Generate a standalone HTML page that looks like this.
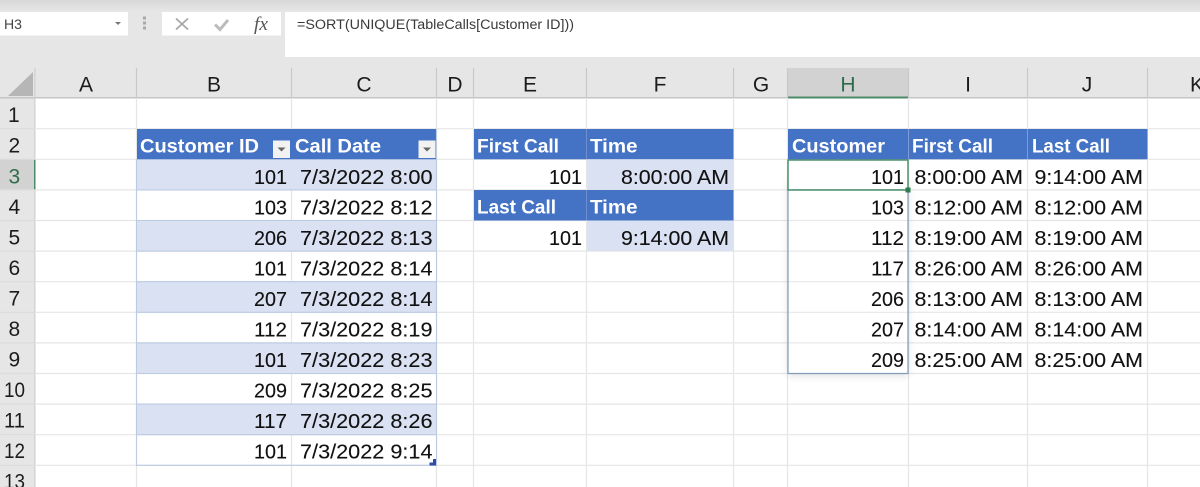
<!DOCTYPE html>
<html><head><meta charset="utf-8"><style>
html,body{margin:0;padding:0;background:#fff;width:1200px;height:487px;overflow:hidden}
svg{display:block;filter:blur(.35px)}
text{font-family:"Liberation Sans",sans-serif}
.c{font-size:20.500px;fill:#111;stroke:#111;stroke-width:.12px}
.h{font-size:19.500px;font-weight:bold;fill:#fff}
.l{font-size:21px;fill:#1c1c1c;text-anchor:middle}
.r{font-size:21px;fill:#1c1c1c}
</style></head><body>
<svg width="1200" height="487" viewBox="0 0 1200 487" xmlns="http://www.w3.org/2000/svg">
<defs>
<linearGradient id="top" x1="0" y1="0" x2="0" y2="1"><stop offset="0" stop-color="#d8d8d8"/><stop offset="1" stop-color="#e6e6e6"/></linearGradient>
<filter id="sh" x="-20%" y="-10%" width="140%" height="120%"><feGaussianBlur stdDeviation="4"/></filter>
</defs>
<rect width="1200" height="68" fill="#e6e6e6"/>
<rect width="1200" height="11" fill="url(#top)"/>
<rect x="0" y="12" width="128" height="23.500" fill="#fff"/>
<text x="4" y="29" font-size="13.500" fill="#444" textLength="18" lengthAdjust="spacingAndGlyphs">H3</text>
<path d="M115 22h6l-3 3z" fill="#777"/>
<g fill="#a8a8a8"><rect x="143" y="16.500" width="3" height="3"/><rect x="143" y="21.500" width="3" height="3"/><rect x="143" y="26.500" width="3" height="3"/></g>
<rect x="162" y="12" width="119" height="23.500" fill="#fff"/>
<path d="M176 18.500l12 11M188 18.500l-12 11" stroke="#a8a8a8" stroke-width="1.800" fill="none"/>
<path d="M215 24.500l5 5 8-9.500" stroke="#bcbcbc" stroke-width="3" fill="none"/>
<text x="254" y="30" font-size="19" font-style="italic" fill="#555" style="font-family:'Liberation Serif',serif" textLength="14" lengthAdjust="spacingAndGlyphs">fx</text>
<rect x="285" y="12" width="915" height="45" fill="#fff"/>
<text x="297" y="29" font-size="13.500" fill="#3a3a3a" textLength="277" lengthAdjust="spacingAndGlyphs">=SORT(UNIQUE(TableCalls[Customer ID]))</text>

<!-- headers -->
<rect x="0" y="68" width="1200" height="30" fill="#e6e6e6"/>
<rect x="0" y="68" width="35" height="419" fill="#e6e6e6"/>
<rect x="788" y="68" width="120" height="30" fill="#d2d2d2"/>
<rect x="0" y="159.500" width="35" height="30.500" fill="#d2d2d2"/>
<path d="M33 72v24H8z" fill="#b6b6b6"/>
<rect x="0" y="97" width="1200" height="1.500" fill="#c4c4c4"/>
<rect x="34.300" y="68" width="1.200" height="419" fill="#cfcfcf"/>
<rect x="788" y="96.500" width="120" height="2" fill="#4c8a68"/>
<rect x="34" y="159.500" width="1.500" height="30.500" fill="#4c8a68"/>
<g stroke="#c8c8c8" stroke-width="1.200">
<path d="M136.500 68v30M291.500 68v30M436.500 68v30M473.500 68v30M586.500 68v30M733.500 68v30M787.500 68v30M908.500 68v30M1027.500 68v30M1147.500 68v30"/>
</g>
<g stroke="#dcdcdc" stroke-width="1.200">
<path d="M0 128.700h35M0 159.300h35M0 189.900h35M0 220.500h35M0 251.100h35M0 281.700h35M0 312.300h35M0 342.900h35M0 373.500h35M0 404.100h35M0 434.700h35M0 465.300h35"/>
</g>
<!-- grid -->
<g stroke="#e6e6e6" stroke-width="1.200">
<path d="M35 128.700H1200M35 159.300H1200M35 189.900H1200M35 220.500H1200M35 251.100H1200M35 281.700H1200M35 312.300H1200M35 342.900H1200M35 373.500H1200M35 404.100H1200M35 434.700H1200M35 465.300H1200"/>
<path d="M136.500 98V487M291.500 98V487M436.500 98V487M473.500 98V487M586.500 98V487M733.500 98V487M787.500 98V487M908.500 98V487M1027.500 98V487M1147.500 98V487"/>
</g>

<!-- table B:C -->
<g fill="#d9e1f2">
<rect x="137" y="159.300" width="299" height="30.600"/>
<rect x="137" y="220.500" width="299" height="30.600"/>
<rect x="137" y="281.700" width="299" height="30.600"/>
<rect x="137" y="342.900" width="299" height="30.600"/>
<rect x="137" y="404.100" width="299" height="30.600"/>
</g>
<rect x="137" y="129" width="299" height="30.300" fill="#4472c4"/>
<g stroke="#bccae2" stroke-width="1.100" fill="none">
<path d="M137 189.900H436M137 220.500H436M137 251.100H436M137 281.700H436M137 312.300H436M137 342.900H436M137 373.500H436M137 404.100H436M137 434.700H436M137 465.300H436"/>
<path d="M136.500 159V466M436.500 129V466"/>
</g>
<rect x="273" y="140.500" width="17" height="17.500" fill="#f2f2f2"/>
<path d="M277.500 147.500h8l-4 4z" fill="#666"/>
<rect x="418.500" y="140.500" width="17" height="17.500" fill="#f2f2f2"/>
<path d="M423 147.500h8l-4 4z" fill="#666"/>
<path d="M436 459v6.500h-6.500v-3h3.500v-3.500z" fill="#2f4da8"/>

<!-- E:F tables -->
<rect x="474" y="129" width="259.500" height="30.300" fill="#4472c4"/>
<rect x="474" y="190" width="259.500" height="30.500" fill="#4472c4"/>
<rect x="587" y="159.300" width="146.500" height="30.600" fill="#d9e1f2"/>
<rect x="587" y="220.500" width="146.500" height="30.600" fill="#d9e1f2"/>
<path d="M586.500 129v30M586.500 190v30.500" stroke="#6f90d0" stroke-width="1"/>

<!-- H:J table -->
<rect x="788" y="129" width="359.500" height="30.300" fill="#4472c4"/>
<path d="M908.500 129v30M1027.500 129v30" stroke="#7f9cd6" stroke-width="1"/>
<rect x="788" y="180" width="120" height="196" fill="#000" opacity=".12" filter="url(#sh)"/>
<rect x="788" y="160" width="120" height="213.500" fill="#fff"/>
<g stroke="#e8e8e8" stroke-width="1.200"><path d="M788 220.500h120M788 251.100h120M788 281.700h120M788 312.300h120M788 342.900h120"/></g>
<rect x="788" y="189.900" width="120" height="183.600" fill="none" stroke="#7f9cbb" stroke-width="1.200"/>
<rect x="788" y="160" width="120" height="30" fill="none" stroke="#3f8a62" stroke-width="1.400"/>
<rect x="905.500" y="187.500" width="5" height="5" fill="#2f7d52"/>

<!-- column letters -->
<text class="l" x="86" y="91.500">A</text>
<text class="l" x="214" y="91.500">B</text>
<text class="l" x="364" y="91.500">C</text>
<text class="l" x="455" y="91.500">D</text>
<text class="l" x="530" y="91.500">E</text>
<text class="l" x="660" y="91.500">F</text>
<text class="l" x="761" y="91.500">G</text>
<text class="l" x="848" y="91.500" style="fill:#2f6b4c">H</text>
<text class="l" x="968" y="91.500">I</text>
<text class="l" x="1087" y="91.500">J</text>
<text class="l" x="1197" y="91.500">K</text>

<!-- row numbers -->
<text class="r" x="8" y="122">1</text>
<text class="r" x="8.500" y="152.500">2</text>
<text class="r" x="8.500" y="183.500" style="fill:#2f6b4c">3</text>
<text class="r" x="8.500" y="214">4</text>
<text class="r" x="8.500" y="244.500">5</text>
<text class="r" x="8.500" y="275">6</text>
<text class="r" x="8.500" y="305.500">7</text>
<text class="r" x="8.500" y="336">8</text>
<text class="r" x="8.500" y="366.500">9</text>
<text class="r" x="4" y="397" textLength="21" lengthAdjust="spacingAndGlyphs">10</text>
<text class="r" x="4" y="427.500" textLength="21" lengthAdjust="spacingAndGlyphs">11</text>
<text class="r" x="4" y="458" textLength="21" lengthAdjust="spacingAndGlyphs">12</text>
<text class="r" x="4" y="488.500" textLength="21" lengthAdjust="spacingAndGlyphs">13</text>

<!-- B:C header -->
<text class="h" x="140" y="152.300" textLength="119" lengthAdjust="spacingAndGlyphs">Customer ID</text>
<text class="h" x="295" y="152.300" textLength="86" lengthAdjust="spacingAndGlyphs">Call Date</text>

<!-- B:C data -->
<text class="c" x="254" y="183.800" textLength="33" lengthAdjust="spacingAndGlyphs">101</text>
<text class="c" x="300" y="183.800" textLength="132.500" lengthAdjust="spacingAndGlyphs">7/3/2022 8:00</text>
<text class="c" x="254" y="214.300" textLength="33" lengthAdjust="spacingAndGlyphs">103</text>
<text class="c" x="300" y="214.300" textLength="132.500" lengthAdjust="spacingAndGlyphs">7/3/2022 8:12</text>
<text class="c" x="254" y="244.800" textLength="33" lengthAdjust="spacingAndGlyphs">206</text>
<text class="c" x="300" y="244.800" textLength="132.500" lengthAdjust="spacingAndGlyphs">7/3/2022 8:13</text>
<text class="c" x="254" y="275.300" textLength="33" lengthAdjust="spacingAndGlyphs">101</text>
<text class="c" x="300" y="275.300" textLength="132.500" lengthAdjust="spacingAndGlyphs">7/3/2022 8:14</text>
<text class="c" x="254" y="305.800" textLength="33" lengthAdjust="spacingAndGlyphs">207</text>
<text class="c" x="300" y="305.800" textLength="132.500" lengthAdjust="spacingAndGlyphs">7/3/2022 8:14</text>
<text class="c" x="254" y="336.300" textLength="33" lengthAdjust="spacingAndGlyphs">112</text>
<text class="c" x="300" y="336.300" textLength="132.500" lengthAdjust="spacingAndGlyphs">7/3/2022 8:19</text>
<text class="c" x="254" y="366.800" textLength="33" lengthAdjust="spacingAndGlyphs">101</text>
<text class="c" x="300" y="366.800" textLength="132.500" lengthAdjust="spacingAndGlyphs">7/3/2022 8:23</text>
<text class="c" x="254" y="397.300" textLength="33" lengthAdjust="spacingAndGlyphs">209</text>
<text class="c" x="300" y="397.300" textLength="132.500" lengthAdjust="spacingAndGlyphs">7/3/2022 8:25</text>
<text class="c" x="254" y="427.800" textLength="33" lengthAdjust="spacingAndGlyphs">117</text>
<text class="c" x="300" y="427.800" textLength="132.500" lengthAdjust="spacingAndGlyphs">7/3/2022 8:26</text>
<text class="c" x="254" y="458.300" textLength="33" lengthAdjust="spacingAndGlyphs">101</text>
<text class="c" x="300" y="458.300" textLength="132.500" lengthAdjust="spacingAndGlyphs">7/3/2022 9:14</text>

<!-- E:F -->
<text class="h" x="477" y="152.300" textLength="82" lengthAdjust="spacingAndGlyphs">First Call</text>
<text class="h" x="590" y="152.300" textLength="47.500" lengthAdjust="spacingAndGlyphs">Time</text>
<text class="c" x="549" y="183.800" textLength="33" lengthAdjust="spacingAndGlyphs">101</text>
<text class="c" x="621" y="183.800" textLength="108" lengthAdjust="spacingAndGlyphs">8:00:00 AM</text>
<text class="h" x="477" y="213.300" textLength="79" lengthAdjust="spacingAndGlyphs">Last Call</text>
<text class="h" x="590" y="213.300" textLength="47.500" lengthAdjust="spacingAndGlyphs">Time</text>
<text class="c" x="549" y="244.800" textLength="33" lengthAdjust="spacingAndGlyphs">101</text>
<text class="c" x="621" y="244.800" textLength="108" lengthAdjust="spacingAndGlyphs">9:14:00 AM</text>

<!-- H:J -->
<text class="h" x="792" y="152.300" textLength="93" lengthAdjust="spacingAndGlyphs">Customer</text>
<text class="h" x="912" y="152.300" textLength="81" lengthAdjust="spacingAndGlyphs">First Call</text>
<text class="h" x="1032" y="152.300" textLength="78" lengthAdjust="spacingAndGlyphs">Last Call</text>

<text class="c" x="871" y="183.800" textLength="33" lengthAdjust="spacingAndGlyphs">101</text>
<text class="c" x="914.500" y="183.800" textLength="108.500" lengthAdjust="spacingAndGlyphs">8:00:00 AM</text>
<text class="c" x="1034.500" y="183.800" textLength="108.500" lengthAdjust="spacingAndGlyphs">9:14:00 AM</text>
<text class="c" x="871" y="214.300" textLength="33" lengthAdjust="spacingAndGlyphs">103</text>
<text class="c" x="914.500" y="214.300" textLength="108.500" lengthAdjust="spacingAndGlyphs">8:12:00 AM</text>
<text class="c" x="1034.500" y="214.300" textLength="108.500" lengthAdjust="spacingAndGlyphs">8:12:00 AM</text>
<text class="c" x="871" y="244.800" textLength="33" lengthAdjust="spacingAndGlyphs">112</text>
<text class="c" x="914.500" y="244.800" textLength="108.500" lengthAdjust="spacingAndGlyphs">8:19:00 AM</text>
<text class="c" x="1034.500" y="244.800" textLength="108.500" lengthAdjust="spacingAndGlyphs">8:19:00 AM</text>
<text class="c" x="871" y="275.300" textLength="33" lengthAdjust="spacingAndGlyphs">117</text>
<text class="c" x="914.500" y="275.300" textLength="108.500" lengthAdjust="spacingAndGlyphs">8:26:00 AM</text>
<text class="c" x="1034.500" y="275.300" textLength="108.500" lengthAdjust="spacingAndGlyphs">8:26:00 AM</text>
<text class="c" x="871" y="305.800" textLength="33" lengthAdjust="spacingAndGlyphs">206</text>
<text class="c" x="914.500" y="305.800" textLength="108.500" lengthAdjust="spacingAndGlyphs">8:13:00 AM</text>
<text class="c" x="1034.500" y="305.800" textLength="108.500" lengthAdjust="spacingAndGlyphs">8:13:00 AM</text>
<text class="c" x="871" y="336.300" textLength="33" lengthAdjust="spacingAndGlyphs">207</text>
<text class="c" x="914.500" y="336.300" textLength="108.500" lengthAdjust="spacingAndGlyphs">8:14:00 AM</text>
<text class="c" x="1034.500" y="336.300" textLength="108.500" lengthAdjust="spacingAndGlyphs">8:14:00 AM</text>
<text class="c" x="871" y="366.800" textLength="33" lengthAdjust="spacingAndGlyphs">209</text>
<text class="c" x="914.500" y="366.800" textLength="108.500" lengthAdjust="spacingAndGlyphs">8:25:00 AM</text>
<text class="c" x="1034.500" y="366.800" textLength="108.500" lengthAdjust="spacingAndGlyphs">8:25:00 AM</text>
</svg>
</body></html>
